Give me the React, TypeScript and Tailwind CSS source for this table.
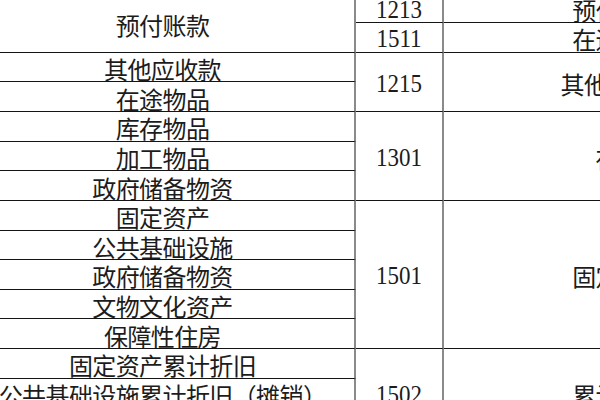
import React from "react";

type Cell = { col: number; row: number; span: number; text: string; num?: boolean };

const cells: Cell[] = [
  { col: 1, row: 1, span: 2, text: "预付账款" },
  { col: 1, row: 3, span: 1, text: "其他应收款" },
  { col: 1, row: 4, span: 1, text: "在途物品" },
  { col: 1, row: 5, span: 1, text: "库存物品" },
  { col: 1, row: 6, span: 1, text: "加工物品" },
  { col: 1, row: 7, span: 1, text: "政府储备物资" },
  { col: 1, row: 8, span: 1, text: "固定资产" },
  { col: 1, row: 9, span: 1, text: "公共基础设施" },
  { col: 1, row: 10, span: 1, text: "政府储备物资" },
  { col: 1, row: 11, span: 1, text: "文物文化资产" },
  { col: 1, row: 12, span: 1, text: "保障性住房" },
  { col: 1, row: 13, span: 1, text: "固定资产累计折旧" },
  { col: 1, row: 14, span: 1, text: "公共基础设施累计折旧（摊销）" },
  { col: 1, row: 15, span: 1, text: "保障性住房累计折旧" },
  { col: 2, row: 1, span: 1, text: "1213", num: true },
  { col: 2, row: 2, span: 1, text: "1511", num: true },
  { col: 2, row: 3, span: 2, text: "1215", num: true },
  { col: 2, row: 5, span: 3, text: "1301", num: true },
  { col: 2, row: 8, span: 5, text: "1501", num: true },
  { col: 2, row: 13, span: 3, text: "1502", num: true },
  { col: 3, row: 1, span: 1, text: "预付账款" },
  { col: 3, row: 2, span: 1, text: "在途物品" },
  { col: 3, row: 3, span: 2, text: "其他应收款" },
  { col: 3, row: 5, span: 3, text: "存货" },
  { col: 3, row: 8, span: 5, text: "固定资产" },
  { col: 3, row: 13, span: 3, text: "累计折旧" },
];

const colCls: Record<number, string> = { 1: "col-start-1", 2: "col-start-2", 3: "col-start-3" };
const rowCls: Record<number, string> = {
  1: "row-start-1", 2: "row-start-2", 3: "row-start-3", 4: "row-start-4", 5: "row-start-5",
  6: "row-start-6", 7: "row-start-7", 8: "row-start-8", 9: "row-start-9", 10: "row-start-10",
  11: "row-start-11", 12: "row-start-12", 13: "row-start-13", 14: "row-start-14", 15: "row-start-15",
};
const spanCls: Record<number, string> = {
  1: "row-span-1", 2: "row-span-2", 3: "row-span-3", 5: "row-span-5",
};

export default function App() {
  return (
    <div className="w-[600px] h-[400px] overflow-hidden bg-white">
      <div className="ml-[-29px] mt-[-6.5px] grid grid-cols-[385px_88px_352px] grid-rows-[repeat(15,29.64px)]">
        {cells.map((c, i) => (
          <div
            key={i}
            className={`${colCls[c.col]} ${rowCls[c.row]} ${spanCls[c.span]} flex items-center justify-center overflow-hidden whitespace-nowrap border-b border-b-[#141414] border-r-2 border-r-[#8a8a8a] text-[#1c1c1c] ${
              c.num
                ? "pt-[3px] font-['Liberation_Serif',serif] text-[23px] leading-none"
                : "pt-[4px] font-['Noto_Sans_CJK_SC',sans-serif] text-[24px] tracking-[-0.6px] leading-none"
            }`}
          >
            <span className={c.num ? "inline-block scale-y-110" : "inline-block"}>{c.text}</span>
          </div>
        ))}
      </div>
    </div>
  );
}
